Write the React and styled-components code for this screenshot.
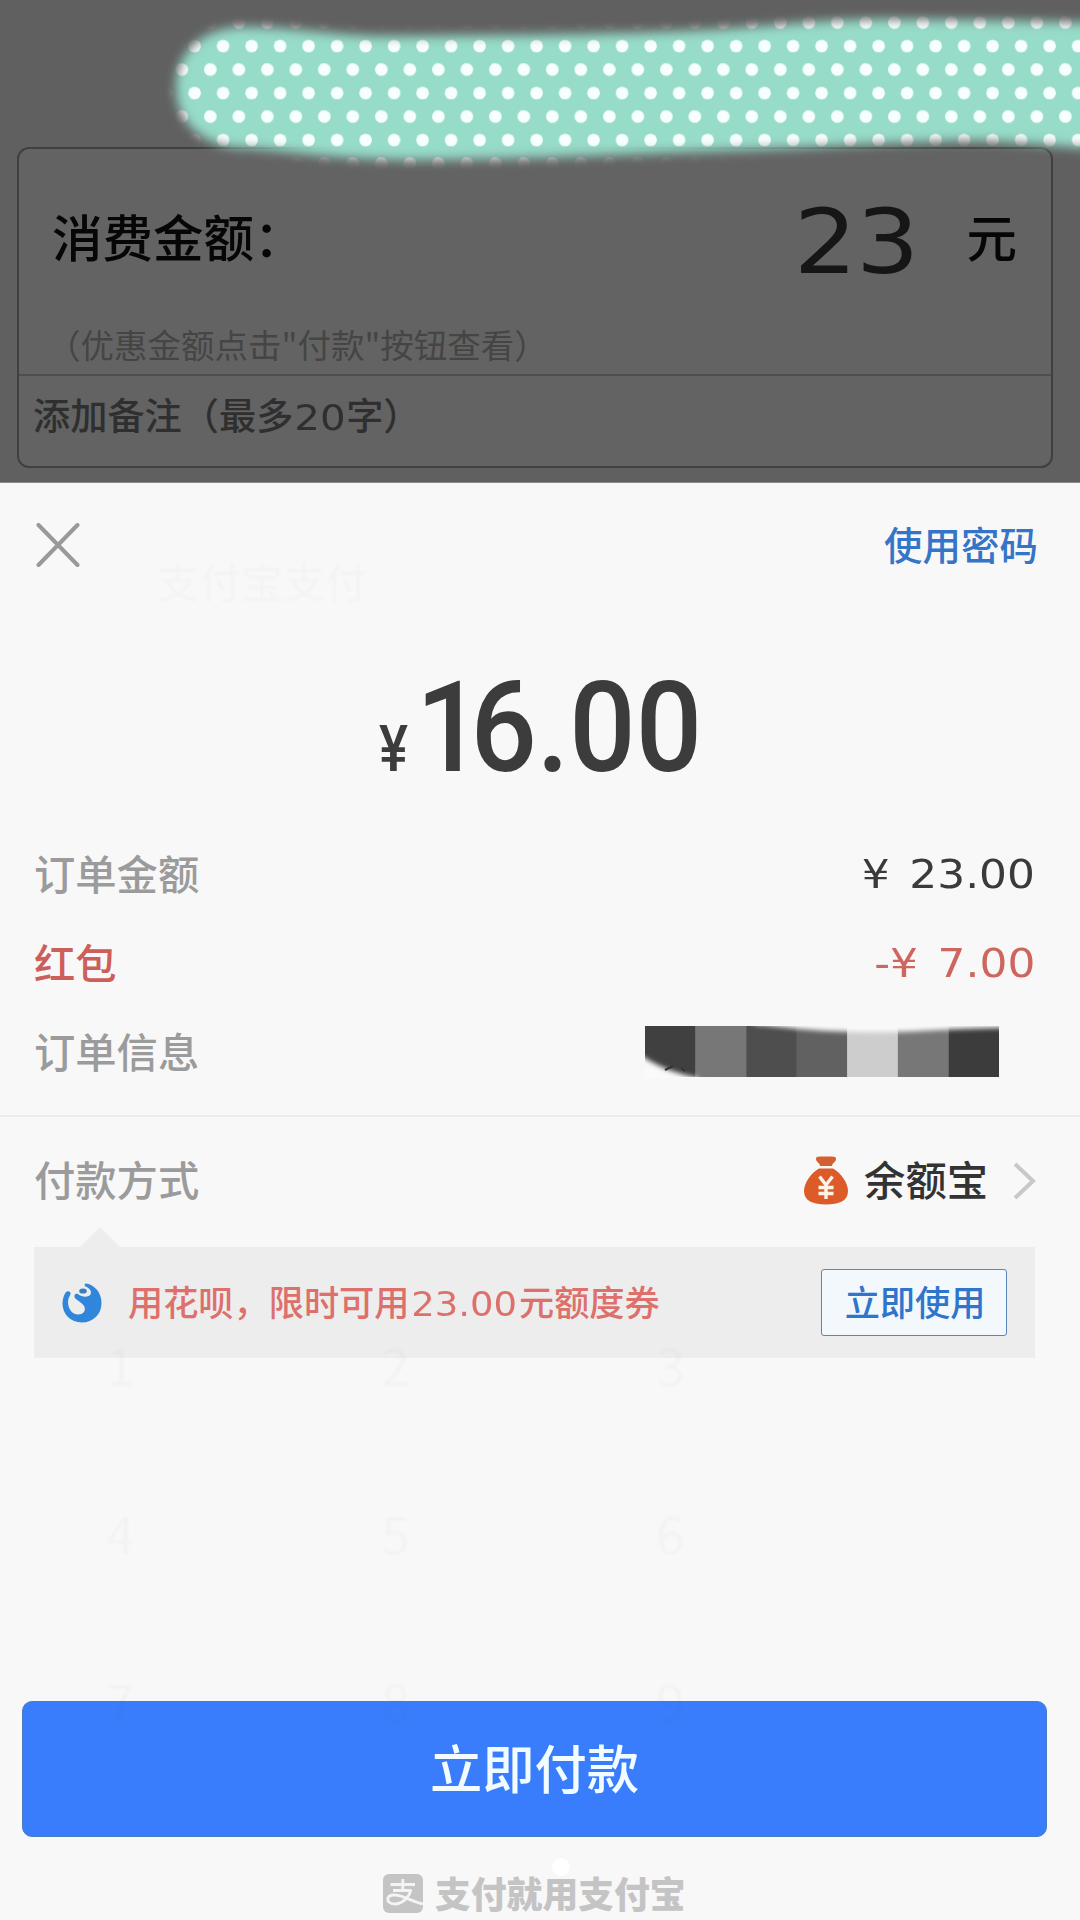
import React from "react";
import styled, { createGlobalStyle } from "styled-components";

const GlobalStyle = createGlobalStyle`
    * {
        box-sizing: border-box;
    }

    body {
        margin: 0;
        background: #f8f8f8;
        font-family: "Noto Sans CJK SC", sans-serif;
    }
`;

const Page = styled.div`
    position: relative;
    width: 1080px;
    height: 1920px;
    overflow: hidden;
    display: flex;
    flex-direction: column;
    background: #f8f8f8;
`;

/* dimmed page behind the sheet */

const Backdrop = styled.div`
    position: relative;
    flex: none;
    height: 483px;
    padding: 147px 27px 0 17px;
    background: #606060;
    border-bottom: 1px solid #8a8a8a;
`;

const Card = styled.div`
    height: 321px;
    border: 2px solid #404040;
    border-radius: 12px;
    background: #636363;
`;

const CardTop = styled.div`
    height: 227px;
    border-bottom: 2px solid #4e4e4e;
`;

const AmountRow = styled.div`
    height: 175px;
    padding: 0 34px 0 33px;
    display: flex;
    align-items: center;
    color: #060606;
    font-size: 50.5px;
    font-weight: 500;
    line-height: 60px;
`;

const AmountLabel = styled.span`
    flex: 1;
    margin-top: -4px;
`;

const AmountInput = styled.span`
    margin-right: 48px;
    margin-top: 11px;
    color: #161616;
    font-family: "DejaVu Sans", sans-serif;
    font-size: 89px;
    font-weight: 400;
    letter-spacing: -1px;
    transform: scaleX(1.12);
    transform-origin: right;
`;

const AmountUnit = styled.span`
    margin-top: -4px;
`;

const Hint = styled.div`
    padding-left: 28px;
    height: 44px;
    line-height: 40px;
    color: #454545;
    font-size: 33.5px;
    white-space: nowrap;
`;

const Remark = styled.div`
    height: 74px;
    line-height: 77px;
    padding-left: 14px;
    color: #2f2f2f;
    font-size: 37.2px;
    font-weight: 500;
    white-space: nowrap;
`;

/* digits run wider than the Chinese glyphs around them */
const WideDigits = styled.span`
    display: inline-block;
    margin: 0 ${(p) => p.$gap}px;
    font-family: "DejaVu Sans", sans-serif;
    font-size: ${(p) => p.$size}px;
    font-weight: 400;
    line-height: 1;
    transform: scaleX(1.12);
`;

const Scribble = styled.svg`
    position: absolute;
    left: 0;
    top: 0;
`;

/* payment sheet */

const Sheet = styled.div`
    position: relative;
    flex: 1;
    display: flex;
    flex-direction: column;
`;

const SheetHeader = styled.div`
    height: 124px;
    padding: 0 42px 0 36px;
    display: flex;
    align-items: center;
    justify-content: space-between;
`;

const PasswordLink = styled.span`
    color: #3575c8;
    font-size: 38.5px;
    font-weight: 500;
    line-height: 44px;
    margin-top: -4px;
`;

const Total = styled.div`
    height: 223px;
    padding: 58px 0 0 379px;
    display: flex;
    align-items: baseline;
    color: #3c3c3c;
    font-family: Roboto, sans-serif;
    font-weight: 500;
    line-height: 126px;
`;

const TotalSign = styled.span`
    width: 37px;
    font-size: 65px;
    transform: scaleX(0.84);
    transform-origin: left;
`;

const TotalValue = styled.span`
    font-size: 127px;
    transform: scaleX(0.92);
    transform-origin: left;
`;

const TightDigit = styled.span`
    letter-spacing: -13px;
`;

const Details = styled.div`
    height: 287px;
    border-bottom: 2px solid #ececec;
`;

const Row = styled.div`
    height: 89px;
    padding: 0 ${(p) => p.$right || 45}px 0 34px;
    display: flex;
    align-items: center;
    justify-content: space-between;
    color: ${(p) => p.$color || "#9b9b9b"};
    font-size: 41.3px;
    font-weight: 500;
    line-height: 50px;
`;

const RowLabel = styled.span`
    margin-top: -5px;
`;

const RowValue = styled.span`
    color: ${(p) => p.$color};
    font-family: "DejaVu Sans", sans-serif;
    font-size: 38.5px;
    font-weight: 400;
    white-space: pre;
    word-spacing: 5px;
    transform: scaleX(1.14);
    transform-origin: right;
`;

const Method = styled.div`
    height: 130px;
    padding: 0 44px 3px 34px;
    display: flex;
    align-items: center;
    color: #9b9b9b;
    font-size: 41.3px;
    font-weight: 500;
    line-height: 50px;
`;

const MethodName = styled.span`
    margin: -5px 24px 0 16px;
    color: #333;
`;

const Grow = styled.div`
    flex: 1;
`;

const Promo = styled.div`
    position: relative;
    margin: 0 45px 0 34px;
    height: 111px;
    padding: 0 28px;
    display: flex;
    align-items: center;
    background: #ededed;
`;

const PromoArrow = styled.div`
    position: absolute;
    left: 46px;
    top: -20px;
    border: solid transparent;
    border-width: 0 20px 20px;
    border-bottom-color: #ededed;
`;

const PromoText = styled.span`
    flex: 1;
    margin: -4px 0 0 26px;
    color: #de706b;
    font-size: 35.2px;
    font-weight: 500;
    line-height: 44px;
    white-space: nowrap;
`;

const UseButton = styled.button`
    width: 186px;
    height: 67px;
    padding: 0 0 5px 2px;
    border: 1.5px solid #5a85b8;
    border-radius: 3px;
    background: #f3f8fd;
    color: #2f75cc;
    font-family: inherit;
    font-size: 35.2px;
    font-weight: 500;
`;

const PayButton = styled.button`
    margin: auto 33px 0 22px;
    height: 136px;
    padding: 0 0 6px;
    border: 1px solid #4a7cc4;
    border-radius: 10px;
    background: #3a7dfc;
    color: #f0fcff;
    font-family: inherit;
    font-size: 52.3px;
    font-weight: 500;
`;

const Footer = styled.div`
    height: 83px;
    padding: 30px 0 0 383px;
    display: flex;
    align-items: center;
    gap: 12px;
    color: #c4c4c4;
    font-size: 35.8px;
    font-weight: 900;
    line-height: 40px;
`;

const FooterText = styled.span`
    margin-top: -4px;
`;

/* the keypad screen fading out through the sheet */
const Ghost = styled.span`
    position: absolute;
    left: ${(p) => p.$x}px;
    top: ${(p) => p.$y}px;
    color: rgba(0, 0, 0, 0.018);
    font-size: ${(p) => p.$size || 52}px;
    line-height: 52px;
    filter: blur(0.8px);
    pointer-events: none;
`;

const HomeDot = styled.div`
    position: absolute;
    left: 552px;
    top: 1858px;
    width: 18px;
    height: 18px;
    border-radius: 50%;
    background: white;
`;

const KEYS = ["1", "2", "3", "4", "5", "6", "7", "8", "9"];

const MOSAIC = ["#404040", "#777", "#4e4e4e", "#616161", "#cdcdcd", "#777", "#3c3c3c"];

const DottedBrush = () => (
    <Scribble width="1080" height="200" viewBox="0 0 1080 200">
        <defs>
            <pattern id="dots" x="208.85" y="34.3" width="28.5" height="47" patternUnits="userSpaceOnUse">
                <rect width="28.5" height="47" fill="#97dbc9" />
                <circle cx="14.25" cy="11.75" r="6.3" fill="#f6fffd" />
                <circle cx="1.5" cy="35.25" r="6.3" fill="#f6fffd" />
                <circle cx="30" cy="35.25" r="6.3" fill="#f6fffd" />
            </pattern>
            <filter id="soft" x="-5%" y="-20%" width="110%" height="140%">
                <feGaussianBlur stdDeviation="5.5" />
            </filter>
            <mask id="brush" maskUnits="userSpaceOnUse" x="0" y="0" width="1080" height="200">
                <path
                    d="M176 88C176 50 204 28 242 27C290 26 340 37 400 36C500 35 580 35 680 31C760 28 810 20 880 19C950 19 1020 21 1110 23V150C1060 147 1010 140 960 141C880 143 800 149 720 151C620 154 520 160 420 160C330 160 280 149 238 148C202 145 176 122 176 88Z"
                    fill="white"
                    filter="url(#soft)"
                />
            </mask>
        </defs>
        <rect width="1080" height="200" fill="url(#dots)" mask="url(#brush)" />
    </Scribble>
);

const MosaicSvg = styled.svg`
    margin-top: -2px;
`;

const Mosaic = () => (
    <MosaicSvg width="354" height="52" viewBox="0 0 354 52">
        <defs>
            <filter id="smear" x="-20%" y="-60%" width="140%" height="220%">
                <feGaussianBlur stdDeviation="2.4" />
            </filter>
        </defs>
        {MOSAIC.map((color, i) => (
            <rect key={i} x={i * 50.57} y="0" width="50.8" height="51" fill={color} />
        ))}
        <g fill="#fafafa" filter="url(#smear)">
            <path d="M108 -12V-2C150 3 180 6 220 6C270 7 300 2 364 2V-12Z" />
            <path d="M-10 26C6 36 22 46 54 52V66H-10Z" />
        </g>
        <path d="M20 44l8-4M36 42l4 3" stroke="#333" strokeWidth="2" />
    </MosaicSvg>
);

const MoneyBag = () => (
    <svg width="44" height="49" viewBox="0 0 44 49">
        <path d="M12 3C12 0 15 1 18 0.600H26C29 1 32 0 32 3C32 6 28 7 28 10H16C16 7 12 6 12 3Z" fill="#d5602f" />
        <path d="M15 12.500H29C37 17 44 27 44 35C44 45 35 48.500 22 48.500S0 45 0 35C0 27 7 17 15 12.500Z" fill="#dd5a29" />
        <path d="M15.500 20.500L22 29L28.500 20.500M22 29V43M14.500 31.500H29.500M14.500 37.500H29.500" fill="none" stroke="#fff3e8" strokeWidth="3.400" />
    </svg>
);

const HuabeiIcon = () => (
    <svg width="40" height="40" viewBox="0 0 40 40">
        <path
            d="M24 0.500C33 2 39.500 10 39.500 20C39.500 31.500 31 39.500 20 39.500C8.500 39.500 0.500 31 0.500 20.500C0.500 16 2 11.500 4 9C6 7.500 9 8.500 8.500 11C8 13 6 15 6 19C6 26 10.500 31.500 16 31.500C21 31.500 24 28 22.500 24C21 20 16 18.500 13 15C11.500 12.500 13.500 10 16 11C20 14.500 26 14.500 28.500 11.500C30 7.500 27 5 23.500 3.500C22 2 22.500 0.500 24 0.500Z"
            fill="#2f86da"
        />
        <ellipse cx="21" cy="8" rx="3.8" ry="2.600" fill="#3a7fb8" />
    </svg>
);

const AlipayLogo = () => (
    <svg width="40" height="39" viewBox="0 0 40 39">
        <rect width="40" height="39" rx="6" fill="#c4c4c4" />
        <g fill="none" stroke="#f4f4f4" strokeWidth="2.800">
            <path d="M7.500 10.500H32M19.800 5V16.500M10 16.500H28.500" />
            <path d="M28 16C26.500 22 21 29.500 12.500 30C6.500 30.300 4 27 5 24C6.500 20 13.500 20.500 19 22.500C26 25 32 28 40 30" />
        </g>
    </svg>
);

const App = () => {
    return (
        <>
            <GlobalStyle />
            <Page>
                <Backdrop>
                    <Card>
                        <CardTop>
                            <AmountRow>
                                <AmountLabel>消费金额：</AmountLabel>
                                <AmountInput>23</AmountInput>
                                <AmountUnit>元</AmountUnit>
                            </AmountRow>
                            <Hint>（优惠金额点击"付款"按钮查看）</Hint>
                        </CardTop>
                        <Remark>
                            添加备注（最多
                            <WideDigits $size={36} $gap={3.5}>20</WideDigits>
                            字）
                        </Remark>
                    </Card>
                    <DottedBrush />
                </Backdrop>
                <Sheet>
                    <SheetHeader>
                        <svg width="44" height="44" viewBox="0 0 44 44">
                            <path d="M2.500 2L41.500 42M41.500 2L2.500 42" stroke="#999" strokeWidth="4" strokeLinecap="round" />
                        </svg>
                        <PasswordLink>使用密码</PasswordLink>
                    </SheetHeader>
                    <Total>
                        <TotalSign>¥</TotalSign>
                        <TotalValue>
                            <TightDigit>1</TightDigit>6.00
                        </TotalValue>
                    </Total>
                    <Details>
                        <Row>
                            <RowLabel>订单金额</RowLabel>
                            <RowValue $color="#3a3a3a">¥ 23.00</RowValue>
                        </Row>
                        <Row $color="#cc5f5a">
                            <RowLabel>红包</RowLabel>
                            <RowValue $color="#cc665f">-¥ 7.00</RowValue>
                        </Row>
                        <Row $right={81}>
                            <RowLabel>订单信息</RowLabel>
                            <Mosaic />
                        </Row>
                    </Details>
                    <Method>
                        <RowLabel>付款方式</RowLabel>
                        <Grow />
                        <MoneyBag />
                        <MethodName>余额宝</MethodName>
                        <svg width="24" height="38" viewBox="0 0 24 38">
                            <path d="M3 2L21 19L3 36" fill="none" stroke="#c8c8c8" strokeWidth="4" />
                        </svg>
                    </Method>
                    <Promo>
                        <PromoArrow />
                        <HuabeiIcon />
                        <PromoText>
                            用花呗，限时可用
                            <WideDigits $size={33} $gap={7.5}>23.00</WideDigits>
                            元额度券
                        </PromoText>
                        <UseButton>立即使用</UseButton>
                    </Promo>
                    <PayButton>立即付款</PayButton>
                    <Footer>
                        <AlipayLogo />
                        <FooterText>支付就用支付宝</FooterText>
                    </Footer>
                </Sheet>
                <HomeDot />
                <Ghost $x={157} $y={554} $size={42}>支付宝支付</Ghost>
                {KEYS.map((key, i) => (
                    <Ghost key={key} $x={106 + (i % 3) * 275} $y={1338 + Math.floor(i / 3) * 168}>
                        {key}
                    </Ghost>
                ))}
            </Page>
        </>
    );
};

export default App;
